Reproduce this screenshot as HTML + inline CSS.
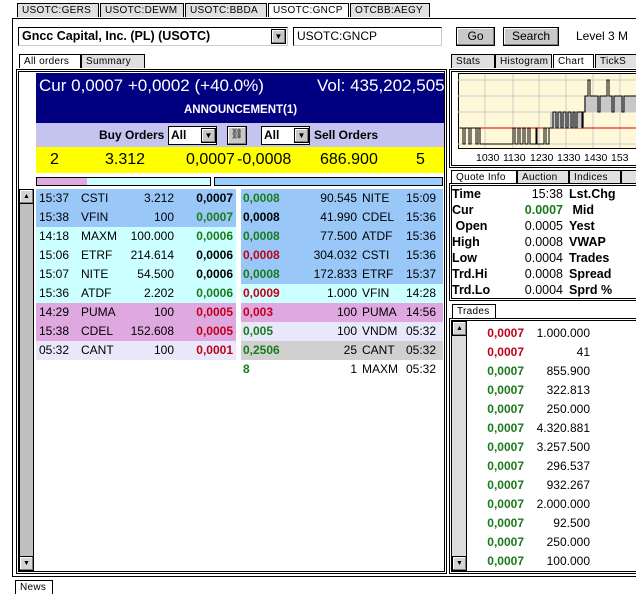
<!DOCTYPE html>
<html><head><meta charset="utf-8"><style>
*{margin:0;padding:0;box-sizing:border-box}
body{width:636px;height:589px;background:#fff;position:relative;overflow:hidden;font-family:"Liberation Sans",Arial,sans-serif;font-size:12px;color:#000}
.a{position:absolute}
.tab{position:absolute;height:14px;background:#e0e0e0;border:1px solid #000;border-bottom:none;font-size:10px;letter-spacing:.3px;line-height:13px;padding-left:4px;white-space:nowrap;overflow:hidden}
.tab.on{background:#fff}
.r{position:absolute;height:19px;line-height:19px;white-space:nowrap}
.b{font-weight:bold}
.g{color:#1a7a1a}.rd{color:#c00018}
.rt{position:absolute;text-align:right}
.btn{position:absolute;background:#c8c8c8;border:1px solid #000;box-shadow:inset -1px -1px #808080,inset 1px 1px #fff;text-align:center;font-size:12px;line-height:16px}
.sb{position:absolute;background:#c0c0c0;border:1px solid #000}
.ar{position:absolute;width:15px;height:15px;background:#d4d4d4;border:1px solid #000;box-shadow:inset -1px -1px #808080,inset 1px 1px #fff;font-size:7px;line-height:13px;text-align:center}
.q{position:absolute;left:452px;width:184px;height:16px;line-height:16px;font-weight:bold;font-size:12.5px}
</style></head><body>
<div class="tab" style="left:17px;top:3px;width:82px">USOTC:GERS</div>
<div class="tab" style="left:100px;top:3px;width:84px">USOTC:DEWM</div>
<div class="tab" style="left:185px;top:3px;width:82px">USOTC:BBDA</div>
<div class="tab on" style="left:268px;top:3px;width:81px">USOTC:GNCP</div>
<div class="tab" style="left:350px;top:3px;width:80px">OTCBB:AEGY</div>
<div class="a" style="left:12px;top:18px;width:624px;height:1px;background:#000"></div>
<div class="a" style="left:12px;top:18px;width:1px;height:559px;background:#000"></div>
<div class="a" style="left:12px;top:576px;width:624px;height:1px;background:#000"></div>
<div class="a" style="left:18px;top:27px;width:270px;height:19px;border:1px solid #000;border-right-color:#ccc;border-bottom-color:#ccc;font-weight:bold;line-height:17px;padding-left:3px;font-size:12.5px">Gncc Capital, Inc. (PL) (USOTC)</div>
<div class="btn" style="left:271px;top:29px;width:15px;height:15px;font-size:8px;line-height:13px">▼</div>
<div class="a" style="left:293px;top:27px;width:149px;height:19px;border:1px solid #000;border-right-color:#ccc;border-bottom-color:#ccc;line-height:17px;padding-left:3px">USOTC:GNCP</div>
<div class="btn" style="left:456px;top:27px;width:39px;height:19px">Go</div>
<div class="btn" style="left:503px;top:27px;width:56px;height:19px">Search</div>
<div class="a" style="left:576px;top:29px;white-space:nowrap">Level 3 M</div>
<div class="tab on" style="left:19px;top:54px;width:62px;height:14px">All orders</div>
<div class="tab" style="left:81px;top:54px;width:64px;height:14px">Summary</div>
<div class="a" style="left:16px;top:69px;width:431px;height:505px;border:3px double #000"></div>
<div class="a" style="left:36px;top:73px;width:408px;height:50px;background:#000080;color:#fff"></div>
<div class="a" style="left:39px;top:76px;color:#fff;font-size:17px">Cur 0,0007 +0,0002 (+40.0%)</div>
<div class="a" style="left:317px;top:76px;color:#fff;font-size:17px">Vol: 435,202,505</div>
<div class="a b" style="left:184px;top:104px;color:#fff;font-size:11.5px">ANNOUNCEMENT(1)</div>
<div class="a" style="left:36px;top:123px;width:408px;height:24px;background:#c4c4ee"></div>
<div class="a b" style="left:99px;top:128px">Buy Orders</div>
<div class="a b" style="left:168px;top:126px;width:49px;height:19px;background:#fff;border:1px solid #000;padding-left:2px;line-height:17px">All</div>
<div class="btn" style="left:201px;top:128px;width:15px;height:15px;font-size:8px;line-height:13px">▼</div>
<div class="btn" style="left:227px;top:126px;width:20px;height:19px;font-size:10px">⛓</div>
<div class="a b" style="left:261px;top:126px;width:49px;height:19px;background:#fff;border:1px solid #000;padding-left:2px;line-height:17px">All</div>
<div class="btn" style="left:294px;top:128px;width:15px;height:15px;font-size:8px;line-height:13px">▼</div>
<div class="a b" style="left:314px;top:128px">Sell Orders</div>
<div class="a" style="left:36px;top:147px;width:408px;height:26px;background:#ffff00;font-size:16px;line-height:26px">
<span class="a" style="left:14px">2</span><span class="a" style="left:69px">3.312</span><span class="a" style="left:150px">0,0007</span><span class="a" style="left:201px">-0,0008</span><span class="a" style="left:284px">686.900</span><span class="a" style="left:380px">5</span></div>
<div class="a" style="left:36px;top:177px;width:175px;height:9px;border:1px solid #000;background:#ccffff"><div style="width:50px;height:7px;background:#e0a8e0"></div></div>
<div class="a" style="left:214px;top:177px;width:229px;height:9px;border:1px solid #000;background:#99ccff"></div>
<div class="sb" style="left:19px;top:189px;width:15px;height:382px"></div>
<div class="ar" style="left:19px;top:189px">▲</div>
<div class="ar" style="left:19px;top:556px">▼</div>
<div id="rows"></div>
<div class="tab" style="left:451px;top:54px;width:44px">Stats</div>
<div class="tab" style="left:495px;top:54px;width:57px">Histogram</div>
<div class="tab on" style="left:553px;top:54px;width:41px">Chart</div>
<div class="tab" style="left:595px;top:54px;width:45px">TickS</div>
<div class="a" style="left:449px;top:69px;width:190px;height:99px;border:3px double #000;border-right:none"></div>
<svg class="a" style="left:452px;top:72px" width="184" height="94">
<rect x="6.5" y="1.5" width="180" height="75" fill="#fff8d8" stroke="#000"/>
<g stroke="#ccc"><line x1="33" y1="2" x2="33" y2="76"/><line x1="61" y1="2" x2="61" y2="76"/><line x1="87" y1="2" x2="87" y2="76"/><line x1="114" y1="2" x2="114" y2="76"/><line x1="141" y1="2" x2="141" y2="76"/><line x1="168" y1="2" x2="168" y2="76"/>
<line x1="6" y1="8" x2="186" y2="8"/><line x1="6" y1="24" x2="186" y2="24"/><line x1="6" y1="40" x2="186" y2="40"/><line x1="6" y1="72" x2="186" y2="72"/></g>
<line x1="6" y1="56" x2="186" y2="56" stroke="#d00"/>
<path d="M98 40 H132 V56 H98Z M132 24 H186 V40 H132Z" fill="#c8c8c8"/>
<path d="M8 56 H11 V72 H13 V56 H17 V72 H19 V56 H24 V72 H26 V56 H28 V72 H61 V56 H63 V72 H66 V56 H68 V72 H71 V56 H73 V72 H76 V56 H78 V72 H84 V56 H85 V72 H92 V56 H94 V72 H97 V56 H101 V40 H104 V56 H106 V40 H109 V56 H111 V40 H114 V56 H116 V40 H119 V56 H121 V40 H123 V56 H125 V40 H130 V56 H131 V40 H133 V24 H136 V8 H138 V24 H146 V40 H148 V24 H155 V8 H157 V24 H160 V40 H162 V24 H170 V40 H172 V24 H186" fill="none" stroke="#000"/>
<g font-size="10.5" font-family="Liberation Sans,sans-serif"><text x="24" y="89">1030</text><text x="51" y="89">1130</text><text x="78" y="89">1230</text><text x="105" y="89">1330</text><text x="132" y="89">1430</text><text x="159" y="89">153</text></g>
</svg>
<div class="tab on" style="left:451px;top:170px;width:66px">Quote Info</div>
<div class="tab" style="left:517px;top:170px;width:52px">Auction</div>
<div class="tab" style="left:569px;top:170px;width:52px">Indices</div>
<div class="tab" style="left:621px;top:170px;width:20px"></div>
<div class="a" style="left:449px;top:183px;width:190px;height:118px;border:3px double #000;border-right:none"></div>
<div id="quote"></div>
<div class="tab on" style="left:452px;top:304px;width:44px">Trades</div>
<div class="a" style="left:449px;top:318px;width:190px;height:256px;border:3px double #000;border-right:none"></div>
<div class="a" style="left:452px;top:321px;width:15px;height:250px;background:#ddd;border-right:1px solid #000"></div>
<div class="ar" style="left:452px;top:321px">▲</div>
<div class="ar" style="left:452px;top:556px">▼</div>
<div id="trades"></div>
<div class="tab on" style="left:15px;top:580px;width:38px">News</div>
<script>
var L=[["15:37","CSTI","3.212","0,0007","",'#99c8f8'],["15:38","VFIN","100","0,0007","g",'#99c8f8'],["14:18","MAXM","100.000","0,0006","g",'#ccffff'],["15:06","ETRF","214.614","0,0006","",'#ccffff'],["15:07","NITE","54.500","0,0006","",'#ccffff'],["15:36","ATDF","2.202","0,0006","g",'#ccffff'],["14:29","PUMA","100","0,0005","rd",'#e0a8e0'],["15:38","CDEL","152.608","0,0005","rd",'#e0a8e0'],["05:32","CANT","100","0,0001","rd",'#e8e8fa']];
var R=[["0,0008","g","90.545","NITE","15:09",'#99c8f8'],["0,0008","","41.990","CDEL","15:36",'#99c8f8'],["0,0008","g","77.500","ATDF","15:36",'#99c8f8'],["0,0008","rd","304.032","CSTI","15:36",'#99c8f8'],["0,0008","g","172.833","ETRF","15:37",'#99c8f8'],["0,0009","rd","1.000","VFIN","14:28",'#ccffff'],["0,003","rd","100","PUMA","14:56",'#e0a8e0'],["0,005","g","100","VNDM","05:32",'#e8e8fa'],["0,2506","g","25","CANT","05:32",'#d0d0d0'],["8","g","1","MAXM","05:32",'#fff']];
var h='';
L.forEach(function(r,i){var y=189+19*i;h+='<div class="r" style="left:36px;top:'+y+'px;width:200px;background:'+r[5]+'"><span class="a" style="left:3px">'+r[0]+'</span><span class="a" style="left:45px">'+r[1]+'</span><span class="rt" style="right:62px">'+r[2]+'</span><span class="rt b '+r[4]+'" style="right:3px">'+r[3]+'</span></div>';});
R.forEach(function(r,i){var y=189+19*i;h+='<div class="r" style="left:241px;top:'+y+'px;width:202px;background:'+r[5]+'"><span class="a b '+r[1]+'" style="left:2px">'+r[0]+'</span><span class="rt" style="right:86px">'+r[2]+'</span><span class="a" style="left:121px">'+r[3]+'</span><span class="rt" style="right:7px">'+r[4]+'</span></div>';});
document.getElementById('rows').innerHTML=h;
var Q=[["Time","15:38","Lst.Chg",""],["Cur","0.0007"," Mid","g"],[" Open","0.0005","Yest",""],["High","0.0008","VWAP",""],["Low","0.0004","Trades",""],["Trd.Hi","0.0008","Spread",""],["Trd.Lo","0.0004","Sprd %",""]];
h='';Q.forEach(function(q,i){var y=186+16*i;h+='<div class="q" style="top:'+y+'px"><span class="a" style="left:0;white-space:pre">'+q[0]+'</span><span class="rt '+(q[3]?'g':'')+'" style="right:73px;font-weight:'+(q[3]?'bold':'normal')+'">'+q[1]+'</span><span class="a" style="left:117px;white-space:pre">'+q[2]+'</span></div>';});
document.getElementById('quote').innerHTML=h;
var T=["1.000.000","41","855.900","322.813","250.000","4.320.881","3.257.500","296.537","932.267","2.000.000","92.500","250.000","100.000"];
h='';T.forEach(function(t,i){var y=324+19*i;h+='<div class="r" style="left:470px;top:'+y+'px;width:122px"><span class="rt b '+(i<2?'rd':'g')+'" style="right:68px">0,0007</span><span class="rt" style="right:2px">'+t+'</span></div>';});
document.getElementById('trades').innerHTML=h;
</script>
</body></html>
